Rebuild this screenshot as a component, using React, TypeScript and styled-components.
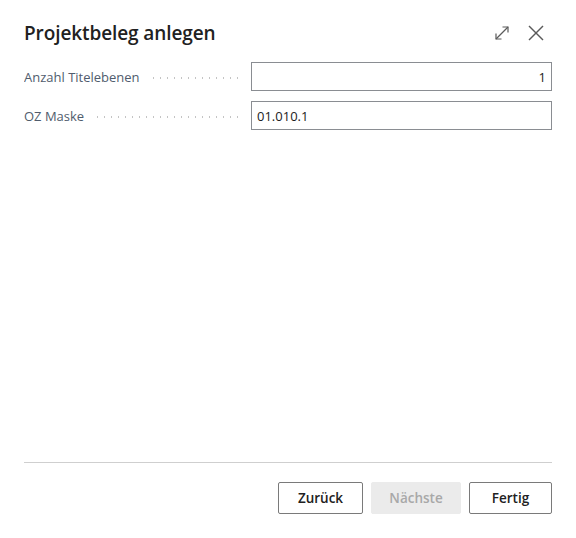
import React from 'react';
import styled, { createGlobalStyle } from 'styled-components';

const GlobalStyle = createGlobalStyle`
  html, body {
    margin: 0;
    padding: 0;
    background: #fff;
  }
  body {
    font-family: 'Open Sans', 'Noto Sans', sans-serif;
    color: #212121;
  }
`;

const Dialog = styled.div`
  box-sizing: border-box;
  width: 576px;
  height: 538px;
  padding: 19px 24px 24px 24px;
  display: flex;
  flex-direction: column;
  background: #fff;
`;

const Header = styled.div`
  display: flex;
  align-items: center;
  justify-content: space-between;
  height: 28px;
  margin-bottom: 15px;
`;

const Title = styled.h1`
  margin: 0;
  font-size: 19px;
  font-weight: 600;
  letter-spacing: -0.1px;
  color: #212121;
`;

const HeaderActions = styled.div`
  display: flex;
  align-items: center;
  gap: 14px;
  margin-right: 6px;
`;

const IconButton = styled.button`
  border: none;
  background: none;
  padding: 0;
  width: 20px;
  height: 20px;
  display: flex;
  align-items: center;
  justify-content: center;
  color: #505050;
  cursor: pointer;
`;

const Fields = styled.div`
  display: flex;
  flex-direction: column;
  gap: 10px;
`;

const FieldRow = styled.div`
  display: grid;
  grid-template-columns: 227px 1fr;
  align-items: center;
`;

const Label = styled.div`
  display: flex;
  align-items: center;
  font-size: 13px;
  color: #505c6d;
  white-space: nowrap;
  overflow: hidden;
`;

const Leader = styled.span`
  flex: 1;
  height: 2px;
  margin: 2px 8px 0 10px;
  background-image: radial-gradient(circle, #c4c4c4 0.8px, transparent 1px);
  background-size: 7px 2px;
  background-repeat: repeat-x;
`;

const Input = styled.input<{ $align?: 'left' | 'right' }>`
  box-sizing: border-box;
  width: 301px;
  height: 29px;
  border: 1px solid #8a8d92;
  border-radius: 0;
  padding: 0 5px;
  font-family: inherit;
  font-size: 13px;
  color: #212121;
  text-align: ${(p) => p.$align ?? 'left'};
  outline: none;
`;

const Spacer = styled.div`
  flex: 1;
`;

const Footer = styled.div`
  border-top: 1px solid #cfcfcf;
  padding-top: 19px;
  display: flex;
  justify-content: flex-end;
  gap: 8px;
`;

const Button = styled.button<{ $width: number; $disabled?: boolean }>`
  box-sizing: border-box;
  width: ${(p) => p.$width}px;
  height: 32px;
  font-family: inherit;
  font-size: 13.5px;
  font-weight: 600;
  border-radius: 2px;
  border: 1px solid ${(p) => (p.$disabled ? '#ebebeb' : '#7a7a7a')};
  background: ${(p) => (p.$disabled ? '#ebebeb' : '#fff')};
  color: ${(p) => (p.$disabled ? '#a8a8a8' : '#212121')};
  cursor: ${(p) => (p.$disabled ? 'default' : 'pointer')};
`;

function ExpandIcon() {
  return (
    <svg width="18" height="18" viewBox="0 0 18 18" fill="none" stroke="#5a5a5a" strokeWidth="1.2">
      <path d="M3 15 L15 3" />
      <path d="M9.5 3 H15 V8.5" />
      <path d="M3 9.5 V15 H8.5" />
    </svg>
  );
}

function CloseIcon() {
  return (
    <svg width="18" height="18" viewBox="0 0 18 18" fill="none" stroke="#5a5a5a" strokeWidth="1.4">
      <path d="M2 2 L16 16" />
      <path d="M16 2 L2 16" />
    </svg>
  );
}

export default function App() {
  return (
    <>
      <GlobalStyle />
      <Dialog>
        <Header>
          <Title>Projektbeleg anlegen</Title>
          <HeaderActions>
            <IconButton aria-label="Vergrößern">
              <ExpandIcon />
            </IconButton>
            <IconButton aria-label="Schließen">
              <CloseIcon />
            </IconButton>
          </HeaderActions>
        </Header>
        <Fields>
          <FieldRow>
            <Label>
              Anzahl Titelebenen
              <Leader />
            </Label>
            <Input $align="right" defaultValue="1" />
          </FieldRow>
          <FieldRow>
            <Label>
              OZ Maske
              <Leader />
            </Label>
            <Input defaultValue="01.010.1" />
          </FieldRow>
        </Fields>
        <Spacer />
        <Footer>
          <Button $width={85}>Zurück</Button>
          <Button $width={90} $disabled>
            Nächste
          </Button>
          <Button $width={83}>Fertig</Button>
        </Footer>
      </Dialog>
    </>
  );
}
